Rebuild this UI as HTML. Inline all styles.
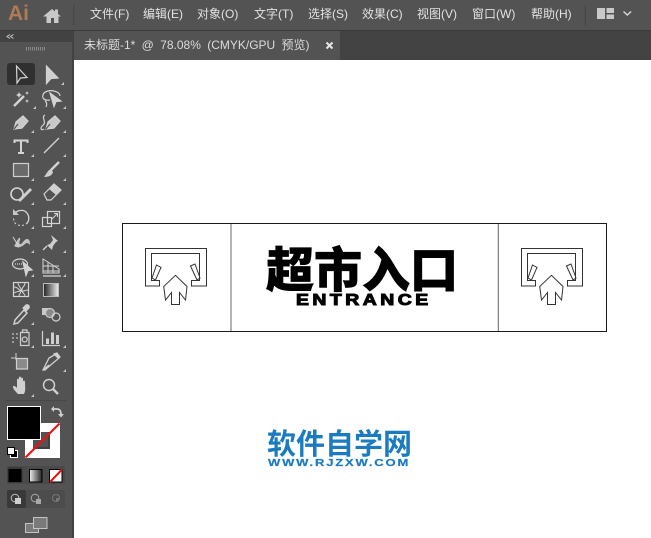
<!DOCTYPE html>
<html lang="zh">
<head>
<meta charset="utf-8">
<title>Illustrator</title>
<style>
html,body{margin:0;padding:0;background:#535353}
body{width:651px;height:538px;position:relative;overflow:hidden;font-family:"Liberation Sans","Noto Sans CJK SC",sans-serif}
.a{position:absolute}
.m{position:absolute;top:6px;font-size:12px;line-height:16px;color:#e2e2e2;white-space:nowrap}
</style>
</head>
<body>
<div class="a" style="left:0;top:0;width:651px;height:30px;background:#535353;border-bottom:1px solid #3a3a3a"></div>
<div class="a" style="left:0;top:31px;width:651px;height:29px;background:#434343"></div>
<div class="a" style="left:74px;top:31px;width:266px;height:29px;background:#535353"></div>
<div class="a" style="left:0;top:31px;width:72px;height:507px;background:#535353"></div>
<div class="a" style="left:0;top:31px;width:72px;height:11px;background:#424242"></div>
<div class="a" style="left:72px;top:31px;width:2px;height:507px;background:#424242"></div>
<div class="a" style="left:74px;top:60px;width:577px;height:478px;background:#fff"></div>

<div class="a" style="left:8px;top:1px;font-size:21px;line-height:26px;font-weight:bold;color:#b07a55">Ai</div>
<svg class="a" style="left:0;top:0" width="651" height="30">
<path d="M43 16.5L52 9l3 2.5V9.500h3v4.500l3 2.500h-2.500V23h-4.500v-5h-3v5h-4.500v-6.500z" fill="#c9c9c9"/>
<rect x="73" y="5" width="1.500" height="20" fill="#484848"/>
<rect x="584.500" y="5" width="1.500" height="20" fill="#484848"/>
<path d="M597 8h8v11h-8zM606.500 8h7.500v5h-7.500zM606.500 14.500h7.500V19h-7.500z" fill="#c9c9c9"/>
<path d="M623.500 11.500l3.800 3.500 3.800-3.500" fill="none" stroke="#d5d5d5" stroke-width="1.500"/>
</svg>
<span class="m" style="left:90px">文件(F)</span>
<span class="m" style="left:143px">编辑(E)</span>
<span class="m" style="left:197px">对象(O)</span>
<span class="m" style="left:254px">文字(T)</span>
<span class="m" style="left:308px">选择(S)</span>
<span class="m" style="left:362px">效果(C)</span>
<span class="m" style="left:417px">视图(V)</span>
<span class="m" style="left:472px">窗口(W)</span>
<span class="m" style="left:531px">帮助(H)</span>

<span class="m" style="left:84px;top:37px;color:#dcdcdc;word-spacing:3px">未标题-1* @ 78.08% (CMYK/GPU 预览)</span>
<svg class="a" style="left:325px;top:41px" width="9" height="9"><path d="M1.500 1.500l6 6M7.500 1.500l-6 6" stroke="#e6e6e6" stroke-width="2"/></svg>

<svg class="a" style="left:0;top:0" width="74" height="538">
<g fill="none" stroke="#c6c6c6" stroke-width="1.300">
<path d="M10 34.500l-3 2 3 2M13.500 34.500l-3 2 3 2" stroke-width="1"/>
<path d="M26.500 47v3.500M28.500 47v3.500M30.500 47v3.500M32.500 47v3.500M34.500 47v3.500M36.500 47v3.500M38.500 47v3.500M40.500 47v3.500M42.500 47v3.500M44.500 47v3.500" stroke="#8a8a8a" stroke-width="1"/>
</g>
<rect x="7" y="63" width="28" height="22" rx="3" fill="#303030"/>
<g fill="none" stroke="#d4d4d4" stroke-width="1.200">
<path d="M16.500 66L27 77.500l-6.500.5-3.500 5z"/>
<path d="M46.500 66L58 78l-7 .5-4.500 5z" fill="#d0d0d0"/>
<!-- wand -->
<path d="M14 106l10-10" stroke-width="2.400"/>
<path d="M19 92l1 2 2 1-2 1-1 2-1-2-2-1 2-1zM27 91l.6 1.400 1.400.6-1.400.6-.6 1.400-.6-1.400-1.400-.6 1.400-.6zM27 99l.6 1.400 1.400.6-1.400.6-.6 1.400-.6-1.400-1.400-.6 1.400-.6z" fill="#d0d0d0" stroke="none"/>
<!-- lasso -->
<path d="M50 100c-6 1-8-2-7-5 1-4 7-5 11-4 4 1 6 3 6 5M45 101c2 1 2 4 1 6"/>
<path d="M50 93l11 8-5 .5-2 5z" fill="#d0d0d0"/>
<!-- pen -->
<path d="M14 129l2-7 7-6 5 5-6 7z" fill="#c8c8c8"/>
<path d="M14 129l4-5" stroke="#535353"/>
<!-- curvature pen -->
<path d="M46 129l2-7 7-6 5 5-6 7z" fill="#c8c8c8"/>
<path d="M46 129l4-5" stroke="#535353"/>
<path d="M45 115c-4 2 1 6-1 9-1 2-3 2-3 4s2 2 3 1"/>
<!-- T -->
<path d="M14.500 143v-2.500h13v2.500M21 140.500v12.500M18 153h6" stroke-width="2"/>
<!-- line -->
<path d="M44 153l15-15" stroke-width="1.300"/>
<!-- rect -->
<rect x="13.500" y="163.500" width="15" height="13" fill="#6a6a6a" stroke="#cfcfcf"/>
<!-- brush -->
<path d="M59 162l-8 8" stroke-width="2.400"/>
<path d="M51 169c-3 1-4 4-7 8 4 0 8-1 9-5z" fill="#cfcfcf" stroke="none"/>
<!-- blob -->
<circle cx="17" cy="194" r="6" stroke-width="1.600"/>
<path d="M19 201l12-12" stroke="#cfcfcf" stroke-width="3"/>
<!-- eraser -->
<path d="M44 194l10-10 7 6-10 10h-4z"/>
<path d="M54 184l7 6-5 5-7-6z" fill="#cfcfcf" stroke="none"/>
<!-- rotate -->
<path d="M15 213c3-3 9-4 12 0 3 4 2 9-1 11" stroke-width="1.300"/>
<path d="M13 209v6h6z" fill="#c8c8c8" stroke="none"/>
<path d="M24 225l-2 .5M20 225.500l-2-.5M16 224l-1.500-1.500M14 220.500l-.5-2" stroke-width="1"/>
<!-- scale -->
<rect x="42.500" y="217.500" width="9" height="9"/>
<rect x="47.500" y="211.500" width="12" height="12"/>
<path d="M52 219l5-5M54 213.500h3.500V217" stroke-width="1"/>
<!-- warp -->
<path d="M14 246c2-2 4-9 6-8 1 1-2 5 0 6s4-5 7-5 3 4 3 6c-1-1-2-2-3-2-2 0-3 3-7 4-2 1-4 0-6-1z" fill="#c4c4c4" stroke="none"/>
<path d="M13 237l6 10" stroke-width="1" />
<!-- pin -->
<path d="M51 235l7 6-2 1-3 4-1 4-5-5 3-1 3-4z" fill="#cfcfcf" stroke="none"/>
<path d="M47 246l-4 4" stroke-width="1.300"/>
<!-- shape builder -->
<ellipse cx="20" cy="264" rx="7.500" ry="5"/>
<path d="M15 264h10" stroke-dasharray="1 1"/>
<path d="M23 262l9 8-4 .5-2 5z" fill="#d0d0d0"/>
<!-- persp -->
<path d="M43 259l16 10v4H43zM43 266h16M43 271h16M48 262v11M53 265v8" stroke-width="1"/>
<path d="M43 276h18" />
<!-- mesh -->
<rect x="13.500" y="282.500" width="15" height="14"/>
<path d="M14 287c4 0 5 3 7 4s4-1 7-1M18 283c0 4 4 4 3 8s-2 3-2 5M25 283c0 4-3 3-3 7s3 3 3 6M14 293c3-2 4-1 6-2" stroke-width="1"/>
</g>
<defs>
<linearGradient id="g1" x1="0" x2="1"><stop offset="0" stop-color="#222"/><stop offset="1" stop-color="#eee"/></linearGradient>
<linearGradient id="g2" x1="0" x2="1"><stop offset="0" stop-color="#eee"/><stop offset="1" stop-color="#222"/></linearGradient>
</defs>
<rect x="43.500" y="283.500" width="15" height="13" fill="url(#g1)" stroke="#bcbcbc"/>
<g fill="none" stroke="#d0d0d0" stroke-width="1.200">
<!-- eyedropper -->
<path d="M15 320l9-10 3 3-9 10-4 1z" stroke-width="1.500"/>
<path d="M23 308l3-3c2-1 4 1 3 3l-3 3z" fill="#d0d0d0"/>
<!-- blend -->
<rect x="42" y="308" width="7" height="7" fill="#c8c8c8" stroke="none"/>
<circle cx="50" cy="313" r="4.500" fill="#8a8a8a" stroke="#c8c8c8"/>
<circle cx="56" cy="317" r="4" />
<!-- symbol spray -->
<path d="M20.500 332.500h8.500v13h-8.500zM22.500 332.500v-2.500h4.500v2.500"/>
<circle cx="24.700" cy="339.500" r="2.500"/>
<path d="M12 333h2v2h-2zM16 333h2v2h-2zM12 337h2v2h-2zM16 337h2v2h-2zM12 341h2v2h-2z" fill="#9a9a9a" stroke="none"/>
<!-- chart -->
<path d="M42.500 331v14.500h17.500"/>
<path d="M46 338.500h3V344h-3zM51 332.500h3V344h-3zM56 335h3v9h-3z" fill="#cfcfcf" stroke="none"/>
<!-- artboard -->
<path d="M11 358h5M16 353v7" stroke-width="1"/>
<path d="M16.500 358.500h11v10.500h-11z" fill="#8a8a8a"/>
<!-- slice -->
<path d="M43 370l6-12 7-4 3 4-6 5-8 7zM43 370l6-5" stroke-width="1.300"/>
<path d="M54 354l3-1 3 4-2 1z" fill="#d0d0d0"/>
<!-- hand -->
<path d="M18 394c-2-2-5-5-5-7 0-2 2-1 3 0l1 1v-8c0-2 2-2 2 0v5-7c0-2 2-2 2 0v7-6c0-2 2-2 2 0v7-4c0-2 2-2 2 0 0 4 1 8-1 12z" fill="#d0d0d0" stroke="none"/>
<!-- zoom -->
<circle cx="49" cy="385" r="5.500" stroke-width="1.500"/>
<path d="M53 389l5 5" stroke-width="2.400"/>
</g>
<g fill="#c6c6c6">
<path d="M61 85l3-3v3zM33 109l3-3v3zM63 109l3-3v3zM31 133l3-3v3zM63 133l3-3v3zM31 157l3-3v3zM63 157l3-3v3zM31 181l3-3v3zM63 181l3-3v3zM31 205l3-3v3zM63 205l3-3v3zM31 229l3-3v3zM63 229l3-3v3zM31 253l3-3v3zM63 253l3-3v3zM31 277l3-3v3zM63 277l3-3v3zM31 325l3-3v3zM31 348l3-3v3zM63 348l3-3v3zM63 372l3-3v3zM31 397l3-3v3z"/>
</g>
<rect x="6" y="400" width="60" height="1" fill="#484848"/>

<!-- stroke box -->
<path fill-rule="evenodd" d="M25 423h35v35H25zM33 432v17h17v-17z" fill="#fff"/>
<rect x="33" y="432" width="17" height="17" fill="#404040"/>
<rect x="33" y="432" width="15" height="15" fill="#535353"/>
<path d="M25.500 457.500L59.500 423.500" stroke="#f01010" stroke-width="2"/>
<!-- fill box -->
<rect x="7.500" y="406.500" width="33" height="33" fill="#000" stroke="#fff"/>
<!-- default -->
<rect x="10.500" y="450.500" width="7" height="7" fill="#000" stroke="#fff"/>
<rect x="7.500" y="447.500" width="7" height="7" fill="#fff" stroke="#000"/>
<!-- swap -->
<path d="M52 409h5c3 0 4 2 4 6" fill="none" stroke="#cfcfcf" stroke-width="1.800"/>
<path d="M54 406v6l-3-3zM58 414h6l-3 3.500z" fill="#cfcfcf"/>

<rect x="7" y="466" width="58" height="18" rx="2" fill="#4a4a4a"/>
<rect x="7.500" y="467" width="15" height="16" rx="1" fill="#3a3a3a"/>
<rect x="8.500" y="469" width="13" height="13" fill="#000"/>
<rect x="29.500" y="469.500" width="12.500" height="12.500" fill="url(#g2)" stroke="#000"/>
<rect x="49.500" y="469.500" width="12.500" height="12.500" fill="#fff" stroke="#000"/>
<path d="M50 482l12-12.500" stroke="#f01010" stroke-width="2"/>

<rect x="7" y="490" width="58" height="18" rx="2" fill="#4c4c4c"/>
<rect x="7" y="490" width="19" height="18" rx="2" fill="#393939"/>
<circle cx="15" cy="498" r="3.800" fill="none" stroke="#bdbdbd"/>
<rect x="15" y="498" width="6" height="6" fill="#cfcfcf"/>
<circle cx="35" cy="498" r="3.800" fill="none" stroke="#a8a8a8"/>
<rect x="36" y="499" width="5" height="5" fill="#a8a8a8"/>
<circle cx="56" cy="498" r="3.500" fill="none" stroke="#777"/>
<rect x="56" y="498" width="3" height="3" fill="#777"/>

<rect x="25.500" y="523.500" width="13" height="9" fill="#7a7a7a" stroke="#c4c4c4"/>
<rect x="33.500" y="517.500" width="13.500" height="11" fill="#7a7a7a" stroke="#c4c4c4"/>
</svg>

<!-- Artwork -->
<svg class="a" style="left:0;top:0" width="651" height="538">
<rect x="122.500" y="223.500" width="484" height="108" fill="#fff" stroke="none"/>
<path d="M231 224V331M498.300 224V331" stroke="#666" stroke-width="1" fill="none"/>
<path d="M122.500 223.500H606.500V331.500H122.500Z" fill="none" stroke="#1a1a1a" stroke-width="1"/>
<g fill="none" stroke="#333" stroke-width="1">
<path d="M145.500 248.500H206.500V286H191.500V280.500H199.500V253.500H151.500V280.500H159.500V286H145.500Z"/>
<path d="M175.500 275.300L187 286.500L185.500 300L179.500 292.500V304.500H171.500V292.500L165.500 300L163.700 286.500Z"/>
<path d="M156.500 265L161 267.500L155.500 280L152 278Z"/>
<path d="M190.500 266L195 264L200 278L197 280Z"/>
</g>
<g fill="none" stroke="#333" stroke-width="1" transform="translate(376 0)">
<path d="M145.500 248.500H206.500V286H191.500V280.500H199.500V253.500H151.500V280.500H159.500V286H145.500Z"/>
<path d="M175.500 275.300L187 286.500L185.500 300L179.500 292.500V304.500H171.500V292.500L165.500 300L163.700 286.500Z"/>
<path d="M156.500 265L161 267.500L155.500 280L152 278Z"/>
<path d="M190.500 266L195 264L200 278L197 280Z"/>
</g>
</svg>
<div class="a" style="left:266px;top:236px;width:200px;font-size:48px;line-height:60px;font-weight:900;color:#000;white-space:nowrap;font-family:'Noto Sans CJK SC',sans-serif;-webkit-text-stroke:.7px #000">超市入口</div>
<div class="a" style="left:296px;top:291px;font-size:15.500px;line-height:20px;font-weight:bold;color:#000;letter-spacing:2.800px;white-space:nowrap;-webkit-text-stroke:1px #000;transform:scaleX(1.25);transform-origin:left top">ENTRANCE</div>
<div class="a" style="left:267px;top:421px;font-size:29px;line-height:42px;font-weight:700;color:#1b7bc0;white-space:nowrap;font-family:'Noto Sans CJK SC',sans-serif">软件自学网</div>
<div class="a" style="left:268px;top:457px;font-size:10px;line-height:14px;font-weight:bold;color:#1b7bc0;letter-spacing:1.400px;white-space:nowrap;-webkit-text-stroke:.2px #1b7bc0;transform:scaleX(1.3);transform-origin:left top">WWW.RJZXW.COM</div>
</body>
</html>
